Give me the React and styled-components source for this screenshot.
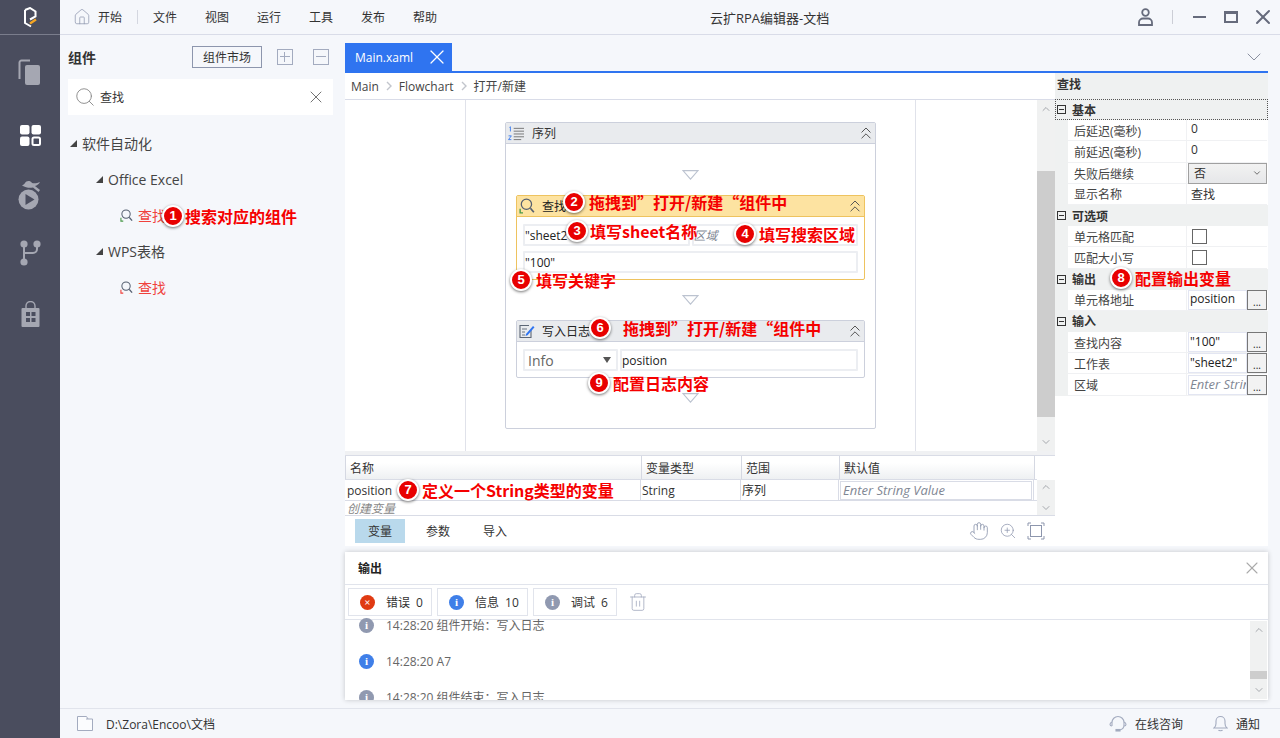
import React from "react";
import styled, { createGlobalStyle } from "styled-components";
import { ChevronDown, ChevronUp, ChevronsUp, Hand, Home, Search, Trash2, X, ZoomIn } from "lucide-react";

const Global = createGlobalStyle`
  html, body { margin: 0; padding: 0; }
  body {
    font-family: "Open Sans", "Noto Sans CJK SC", sans-serif;
    font-size: 12px;
    color: #333;
    background: #f5f7fb;
  }
`;

const Page = styled.div`
  position: relative;
  display: flex;
  width: 1280px;
  height: 738px;
  overflow: hidden;
`;

const Rail = styled.aside`
  width: 60px;
  background: #4a4d5e;
  display: flex;
  flex-direction: column;
  align-items: center;
`;

const RailLogo = styled.div`
  width: 100%;
  height: 34px;
  margin-bottom: 8px;
  border-bottom: 1px solid #7a7d8c;
  display: flex;
  align-items: center;
  justify-content: center;
`;

const RailIcon = styled.div`
  height: ${(p) => p.$h}px;
  display: flex;
  align-items: center;
  justify-content: center;
  color: ${(p) => (p.$active ? "#fff" : "#a5a7b2")};
`;

const Main = styled.div`
  flex: 1;
  display: flex;
  flex-direction: column;
  min-width: 0;
`;

const TitleBar = styled.header`
  height: 34px;
  border-bottom: 1px solid #d9dce8;
  display: flex;
  align-items: center;
  padding-left: 13px;
  position: relative;
  font-size: 12px;
  color: #333;
`;

const MenuItem = styled.span`
  margin-right: 28px;
`;

const HomeItem = styled.span`
  display: flex;
  align-items: center;
  gap: 7px;
  padding-right: 15px;
  margin-right: 15px;
  border-right: 1px solid #d4d7e0;
  height: 14px;
  color: #8d96ad;
  span { color: #333; }
`;

const AppTitle = styled.div`
  position: absolute;
  left: 650px;
  top: 8px;
  font-size: 13px;
  color: #333;
`;

const WindowButtons = styled.div`
  margin-left: auto;
  display: flex;
  align-items: center;
  color: #666b7c;
  padding-right: 5px;
`;

const WinDivider = styled.div`
  width: 1px;
  height: 14px;
  background: #ccced6;
  margin: 0 20px 0 19px;
`;

const MinBar = styled.div`
  width: 13px;
  height: 2px;
  background: currentColor;
  margin-right: 18px;
`;

const MaxBox = styled.div`
  width: 14px;
  height: 12px;
  box-sizing: border-box;
  border: 2px solid currentColor;
  border-top-width: 3px;
  margin-right: 13px;
`;

const Body = styled.div`
  flex: 1;
  display: flex;
  min-height: 0;
`;

const LeftPanel = styled.section`
  width: 285px;
  flex: none;
`;

const PanelHead = styled.div`
  height: 44px;
  padding: 0 16px 0 8px;
  display: flex;
  align-items: center;
  font-size: 14px;
  font-weight: 700;
  color: #333;
`;

const MarketButton = styled.button`
  margin-left: auto;
  width: 70px;
  height: 22px;
  padding: 0;
  box-sizing: border-box;
  background: transparent;
  border: 1px solid #8d96ad;
  font: inherit;
  font-size: 12px;
  font-weight: 400;
  color: #333;
`;

const SquareButton = styled.span`
  width: 16px;
  height: 16px;
  box-sizing: border-box;
  border: 1px solid #a3abbf;
  margin-left: ${(p) => p.$gap}px;
  position: relative;
  &::before {
    content: "";
    position: absolute;
    left: 2px;
    right: 2px;
    top: 6px;
    height: 1px;
    background: #a3abbf;
  }
  &::after {
    content: "";
    display: ${(p) => (p.$plus ? "block" : "none")};
    position: absolute;
    top: 2px;
    bottom: 2px;
    left: 6px;
    width: 1px;
    background: #a3abbf;
  }
`;

const SearchBox = styled.div`
  margin: 0 12px 11px 8px;
  height: 36px;
  background: #fff;
  display: flex;
  align-items: center;
  padding: 0 7px 0 6px;
  gap: 4px;
  font-size: 12px;
  color: #333;
  svg:last-child { margin-left: auto; }
`;

const TreeRow = styled.div`
  height: 36px;
  box-sizing: border-box;
  padding: 0 0 2px ${(p) => p.$indent}px;
  display: flex;
  align-items: center;
  gap: 5px;
  font-size: 14px;
  color: ${(p) => (p.$leaf ? "#f0413c" : "#444")};
`;

const Caret = styled.i`
  width: 0;
  height: 0;
  border-style: solid;
  border-width: 0 0 7px 7px;
  border-color: transparent transparent #444 transparent;
`;

const Workspace = styled.div`
  flex: 1;
  display: flex;
  flex-direction: column;
  min-width: 0;
  margin-right: 12px;
`;

const TabStrip = styled.div`
  height: 36px;
  flex: none;
  display: flex;
  align-items: flex-end;
  border-bottom: 2px solid #2f74f0;
  position: relative;
`;

const Tab = styled.div`
  width: 107px;
  height: 28px;
  background: #2f74f0;
  color: #fff;
  display: flex;
  align-items: center;
  justify-content: space-between;
  padding: 0 3px 0 10px;
  box-sizing: border-box;
  font-size: 12px;
`;

const TabMore = styled.span`
  position: absolute;
  right: 2px;
  top: 10px;
  color: #8a90a0;
  display: flex;
`;

const EditorRow = styled.div`
  height: 473px;
  flex: none;
  display: flex;
`;

const EditorCol = styled.div`
  flex: 1;
  min-width: 0;
  display: flex;
  flex-direction: column;
  background: #f0f1f3;
`;

const Breadcrumb = styled.div`
  height: 26px;
  background: #fff;
  border-bottom: 1px solid #d9dce8;
  display: flex;
  align-items: center;
  padding-left: 6px;
  gap: 5px;
  color: #444;
  font-size: 12px;
  svg { color: #c2c5cc; }
`;

const DesignerRow = styled.div`
  height: 351px;
  display: flex;
`;

const Canvas = styled.div`
  flex: 1;
  background: #fff;
  display: flex;
  justify-content: center;
`;

const Lane = styled.div`
  width: 451px;
  margin-right: 1px;
  box-sizing: border-box;
  border: solid #e0e2ea;
  border-width: 0 1px;
  padding: 22px 39px 0;
`;

const SeqBox = styled.div`
  height: 307px;
  box-sizing: border-box;
  border: 1px solid #ccd0dc;
  border-radius: 2px;
  padding: 0 10px;
`;

const SeqHeader = styled.div`
  height: 20px;
  margin: 0 -10px;
  background: #e9ebee;
  border-bottom: 1px solid #ccd0dc;
  display: flex;
  align-items: center;
  padding: 0 0 0 2px;
  gap: 7px;
  color: #333;
  font-size: 12px;
  svg:last-child { margin: 0 -1px 0 auto; color: #555; }
`;

const DropSvg = styled.svg`
  display: block;
  margin: ${(p) => p.$top}px auto ${(p) => p.$bottom}px;
`;

const Drop = ({ top, bottom }) => (
  <DropSvg $top={top} $bottom={bottom} width="17" height="10" viewBox="0 0 17 10" fill="none">
    <path d="M1 .6h15L8.500 9.200z" stroke="#bcc3d0" strokeWidth="1.100" />
  </DropSvg>
);

const Card = styled.div`
  border: 1px solid ${(p) => (p.$warn ? "#eec35f" : "#ccd0dc")};
  border-radius: 2px;
  padding-bottom: 6px;
`;

const CardHead = styled.div`
  height: 20px;
  background: ${(p) => (p.$warn ? "#fde3a1" : "#e9ebee")};
  border-bottom: 1px solid ${(p) => (p.$warn ? "#eec35f" : "#ccd0dc")};
  display: flex;
  align-items: center;
  padding: 0 0 0 2px;
  gap: 7px;
  font-size: 12px;
  color: #222;
  svg:last-child { margin: 0 -1px 0 auto; color: #555; }
`;

const CardRow = styled.div`
  display: flex;
  gap: 2px;
  padding: ${(p) => p.$top}px 6px 0;
`;

const Field = styled.div`
  flex: 1;
  min-width: 0;
  height: 22px;
  box-sizing: border-box;
  border: 2px solid #eceef2;
  border-radius: 1px;
  padding-left: 0;
  display: flex;
  align-items: center;
  font-size: 12px;
  color: ${(p) => (p.$hint ? "#7f8794" : "#222")};
  font-style: ${(p) => (p.$hint ? "italic" : "normal")};
  white-space: nowrap;
  overflow: hidden;
`;

const LevelField = styled(Field)`
  flex: none;
  width: 95px;
  padding: 0 5px 0 3px;
  font-size: 14px;
  color: #666;
  justify-content: space-between;
`;

const SmallCaret = styled.i`
  width: 0;
  height: 0;
  border-style: solid;
  border-width: 6px 4.5px 0;
  border-color: #555 transparent transparent;
`;

const ScrollBar = styled.div`
  width: ${(p) => p.$w || 18}px;
  flex: none;
  background: #f0f1f1;
  display: flex;
  flex-direction: column;
  align-items: center;
  justify-content: space-between;
  color: #a5a8ad;
  position: relative;
  svg { position: relative; z-index: 1; margin: 3px 0; }
`;

const VarScroll = styled(ScrollBar)`
  margin-top: 24px;
  svg { margin: 1px 0; }
`;

const Thumb = styled.div`
  position: absolute;
  left: 0;
  right: 0;
  top: ${(p) => p.$top}px;
  height: ${(p) => p.$h}px;
  background: #cdcdcd;
`;

const VarGrid = styled.div`
  height: 61px;
  margin-top: 4px;
  background: #fff;
  border-top: 1px solid #d9dce6;
  border-bottom: 1px solid #d9dce6;
  display: flex;
  box-sizing: border-box;
`;

const VarTable = styled.div`
  flex: 1;
  min-height: 0;
  display: flex;
  flex-direction: column;
`;

const VarRow = styled.div`
  flex: none;
  display: grid;
  grid-template-columns: 296px 100px 98px 195px;
  height: ${(p) => p.$h}px;
  border-bottom: 1px solid #d9dce6;
`;

const VarHeadCell = styled.div`
  background: linear-gradient(#fff 30%, #eef0f2);
  border-left: 1px solid #d5d8e2;
  border-right: 1px solid #d5d8e2;
  margin-right: -1px;
  padding: 1px 0 0 4px;
  display: flex;
  align-items: center;
  font-size: 12px;
  color: #333;
`;

const VarCell = styled.div`
  border-right: 1px solid #d9dce6;
  padding-left: ${(p) => p.$pad ?? 1}px;
  display: flex;
  align-items: center;
  font-size: 12px;
  color: #333;
`;

const HintBox = styled.div`
  flex: 1;
  height: 17px;
  margin-right: 1px;
  border: 1px solid #d9dce6;
  padding-left: 2px;
  display: flex;
  align-items: center;
  font-style: italic;
  color: #7f8794;
  font-size: 13px;
  white-space: nowrap;
  overflow: hidden;
`;

const AddVar = styled.div`
  flex: 1;
  min-height: 0;
  display: flex;
  align-items: center;
  font-size: 12px;
  font-style: italic;
  color: #888;
  padding-left: 2px;
`;

const VarTabs = styled.div`
  height: 30px;
  background: #fff;
  display: flex;
  align-items: center;
  padding-left: 10px;
  color: #8d96ad;
`;

const VarTab = styled.div`
  width: ${(p) => p.$w}px;
  height: 24px;
  display: flex;
  align-items: center;
  justify-content: center;
  font-size: 12px;
  color: #333;
  background: ${(p) => (p.$active ? "#b9d9ec" : "transparent")};
`;

const ToolIcons = styled.div`
  margin-left: auto;
  display: flex;
  align-items: center;
  gap: 10px;
  padding-right: 10px;
`;

const Props = styled.aside`
  width: 213px;
  flex: none;
  background: #fff;
`;

const PropsTitle = styled.div`
  height: 22px;
  padding: 0 0 4px 2px;
  background: #eff1f1;
  display: flex;
  align-items: center;
  font-size: 12px;
  font-weight: 700;
  color: #333;
`;

const Category = styled.div`
  height: 21.2px;
  box-sizing: border-box;
  background: #eff1f1;
  display: flex;
  align-items: center;
  padding-left: ${(p) => (p.$focus ? 1 : 2)}px;
  gap: 6px;
  font-size: 12px;
  font-weight: 700;
  color: #333;
  border: ${(p) => (p.$focus ? "1px dotted #555" : "0")};
`;

const Minus = styled.span`
  width: 9px;
  height: 9px;
  box-sizing: border-box;
  border: 1px solid #333;
  position: relative;
  &::after {
    content: "";
    position: absolute;
    left: 1px;
    right: 1px;
    top: 3px;
    height: 1px;
    background: #333;
  }
`;

const PropRow = styled.div`
  height: 21.2px;
  margin: 0 1px 0 13px;
  display: grid;
  grid-template-columns: 119px 1fr;
  box-sizing: border-box;
  border-bottom: 1px solid #f0f1f3;
  position: relative;
  &::before {
    content: "";
    position: absolute;
    left: -13px;
    top: 0;
    bottom: -1px;
    width: 13px;
    background: #eff1f1;
  }
`;

const PropLabel = styled.div`
  padding: 1px 0 0 6px;
  border-right: 1px solid #f0f1f3;
  display: flex;
  align-items: center;
  font-size: 12px;
  color: #444;
`;

const PropValue = styled.div`
  display: flex;
  align-items: center;
  padding: 0 0 ${(p) => (p.$raised ? 3 : 0)}px 4px;
  font-size: 12px;
  color: #333;
  min-width: 0;
`;

const PropSelect = styled.div`
  flex: 1;
  height: 21px;
  margin-left: -3px;
  box-sizing: border-box;
  border: 1px solid #a0a0a0;
  background: linear-gradient(#f2f2f2, #e6e7e9);
  padding: 0 4px 0 5px;
  display: flex;
  align-items: center;
  justify-content: space-between;
  svg { color: #555; }
`;

const CheckBox = styled.span`
  width: 13px;
  height: 13px;
  margin-left: 1px;
  border: 1px solid #666;
`;

const PropInput = styled.div`
  flex: 1;
  min-width: 0;
  height: 20px;
  box-sizing: border-box;
  margin-left: -3px;
  border: 1px solid #e3e6f2;
  padding: 0 0 2px 1px;
  overflow: hidden;
  white-space: nowrap;
  display: flex;
  align-items: center;
  font-size: ${(p) => (p.$hint ? 13 : 12)}px;
  color: ${(p) => (p.$hint ? "#7f8794" : "#222")};
  font-style: ${(p) => (p.$hint ? "italic" : "normal")};
`;

const Dots = styled.div`
  width: 20px;
  height: 20px;
  flex: none;
  box-sizing: border-box;
  border: 1px solid #777;
  background: #f2f2f2;
  display: flex;
  align-items: flex-end;
  justify-content: center;
  font-size: 10px;
  line-height: 14px;
  color: #222;
`;

const Output = styled.section`
  height: 148px;
  margin-top: 6px;
  flex: none;
  background: #fff;
  box-shadow: 0 0 5px rgba(0, 0, 0, 0.2);
  display: flex;
  flex-direction: column;
  position: relative;
`;

const OutputHead = styled.div`
  height: 33px;
  flex: none;
  box-sizing: border-box;
  border-bottom: 1px solid #e1e4ec;
  display: flex;
  align-items: center;
  justify-content: space-between;
  padding: 0 6px 0 13px;
  font-size: 12px;
  font-weight: 700;
  color: #222;
  svg { color: #aaa; }
`;

const OutputTools = styled.div`
  height: 35px;
  flex: none;
  box-sizing: border-box;
  border-bottom: 1px solid #e1e4ec;
  display: flex;
  align-items: center;
  padding-left: 3px;
  gap: 5px;
  svg:last-child { color: #a3abbf; margin-left: 6px; }
`;

const FilterButton = styled.div`
  width: ${(p) => p.$w}px;
  height: 28px;
  box-sizing: border-box;
  border: 1px solid #e1e4ec;
  display: flex;
  align-items: center;
  padding-left: 11px;
  gap: 11px;
  font-size: 12px;
  word-spacing: 3px;
  color: #333;
`;

const Dot = styled.span`
  width: 15px;
  height: 15px;
  flex: none;
  border-radius: 50%;
  background: ${(p) => p.$color};
  color: #fff;
  font-size: 11px;
  font-weight: 700;
  line-height: 15px;
  text-align: center;
  font-family: "Liberation Serif", serif;
`;

const LogArea = styled.div`
  flex: 1;
  display: flex;
  min-height: 0;
  padding: 1px 1px 1px 0;
`;

const LogList = styled.div`
  flex: 1;
  overflow: hidden;
  padding-left: 14px;
  margin: -14px 0 -1px;
`;

const LogRow = styled.div`
  height: 36px;
  display: flex;
  align-items: center;
  gap: 12px;
  font-size: 12px;
  color: #666;
`;

const StatusBar = styled.footer`
  height: 30px;
  flex: none;
  margin-top: 8px;
  box-sizing: border-box;
  border-top: 1px solid #e1e4ec;
  display: flex;
  align-items: center;
  padding: 0 20px 0 17px;
  font-size: 12px;
  color: #333;
  svg { color: #a3abbf; flex: none; }
`;

const PathText = styled.span`
  margin-left: 13px;
`;

const StatusRight = styled.div`
  margin-left: auto;
  display: flex;
  align-items: center;
  gap: 8px;
`;

const ConsultText = styled.span`
  margin-right: 22px;
`;

const Callout = styled.div`
  position: absolute;
  left: ${(p) => p.$x}px;
  top: ${(p) => p.$y}px;
  height: 22px;
  display: flex;
  align-items: center;
  gap: ${(p) => p.$gap}px;
  white-space: nowrap;
  font-family: "Noto Sans CJK SC", "Liberation Sans", sans-serif;
  font-size: 16px;
  font-weight: 700;
  color: #f50000;
`;

const Badge = styled.span`
  width: 18px;
  height: 18px;
  flex: none;
  border-radius: 50%;
  box-sizing: content-box;
  border: 2px solid #fff;
  background: #e80000;
  box-shadow: 0 1px 3px rgba(0, 0, 0, 0.55);
  color: #fff;
  font-family: "Liberation Sans", sans-serif;
  font-size: 13px;
  line-height: 18px;
  text-align: center;
`;

const Logo = () => (
  <svg width="14" height="21" viewBox="0 0 14 21" fill="none">
    <path d="M2 3 L7 1 L12.500 4.500 V9.500 L7 12.500" stroke="#fff" strokeWidth="2" />
    <path d="M2 3 V16 L8 19.500" stroke="#fff" strokeWidth="2" />
    <path d="M7 16.500 L13 12.500" stroke="#f5a623" strokeWidth="2.200" />
  </svg>
);

const DocsIcon = () => (
  <svg width="24" height="28" viewBox="0 0 24 28" fill="none">
    <path d="M12 1.500H3.500a2 2 0 0 0-2 2V20" stroke="currentColor" strokeWidth="2" />
    <rect x="7" y="6" width="15" height="20" rx="2" fill="currentColor" />
  </svg>
);

const GridIcon = () => (
  <svg width="21" height="21" viewBox="0 0 21 21" fill="currentColor">
    <rect width="9.500" height="9.500" rx="2" />
    <rect x="11.500" width="9.500" height="9.500" rx="2" />
    <rect y="11.500" width="9.500" height="9.500" rx="2" />
    <rect x="12.500" y="12.500" width="7.500" height="7.500" rx="1.500" fill="none" stroke="currentColor" strokeWidth="2" />
  </svg>
);

const RobotIcon = () => (
  <svg width="24" height="30" viewBox="0 0 24 30" fill="currentColor">
    <circle cx="10.500" cy="19.500" r="10" />
    <path d="M7.500 14v11l9-5.500z" fill="#4a4d5e" />
    <path d="M7 3c1-2 5-3 7 0 2 .5 5 .5 8-1-1 2-3 3.500-5 4l5 4-1.500 2-5.500-4.500c-3 .5-7 .5-11-2 1-.5 2.500-1.500 3-2.500z" />
  </svg>
);

const BranchIcon = () => (
  <svg width="22" height="26" viewBox="0 0 22 26" fill="none">
    <circle cx="5" cy="4" r="3.600" fill="currentColor" />
    <circle cx="18" cy="4" r="3.600" fill="currentColor" />
    <circle cx="5" cy="22" r="3.600" fill="currentColor" />
    <path d="M5 6v14M18 6v3a4 4 0 0 1-4 4H5" stroke="currentColor" strokeWidth="2" />
  </svg>
);

const StoreIcon = () => (
  <svg width="19" height="27" viewBox="0 0 19 27" fill="currentColor">
    <path d="M5 7V5a4.500 4.500 0 0 1 9 0v2" fill="none" stroke="currentColor" strokeWidth="1.400" />
    <path d="M1.500 7h16a1 1 0 0 1 1 1v17a1 1 0 0 1-1 1h-16a1 1 0 0 1-1-1V8a1 1 0 0 1 1-1z" />
    <path d="M5 11h4v4H5zM10.500 11h4v4h-4zM5 17h4v4H5zM10.500 17h4v4h-4z" fill="#4a4d5e" />
  </svg>
);

const UserIcon = () => (
  <svg width="15" height="18" viewBox="0 0 15 18" fill="none" stroke="currentColor" strokeWidth="1.800">
    <circle cx="7.500" cy="4.500" r="3.300" />
    <path d="M1 17v-2.500C1 12 3 10.500 5 10.500h5c2 0 4 1.500 4 4V17z" />
  </svg>
);

const LeafIcon = ({ size = 13, mark = "#4a9a4a" }) => (
  <svg width={size} height={size} viewBox="0 0 14 14" fill="none">
    <circle cx="6.500" cy="5.500" r="4.500" stroke="#555f70" strokeWidth="1.100" />
    <path d="M10 9l3 3.500" stroke="#555f70" strokeWidth="1.500" />
    <path d="M1 9.500v3.500h2.500" stroke={mark} strokeWidth="1.200" />
  </svg>
);

const SeqIcon = () => (
  <svg width="17" height="15" viewBox="0 0 18 16" fill="none">
    <path d="M6 2.500h11M6 5.500h11M6 8.500h11M6 11.500h11M6 14.500h8" stroke="#666" strokeWidth="0.900" />
    <path d="M1.500 1.500l1-.7v5M.5 10.500h3l-3 4h3" stroke="#2f74f0" strokeWidth="0.900" />
  </svg>
);

const LogIcon = () => (
  <svg width="16" height="16" viewBox="0 0 16 16" fill="none">
    <path d="M12 7v7.500H1V2.500h9" stroke="#5c6675" strokeWidth="1.100" />
    <path d="M3 6h5M3 9h3M3 12h3" stroke="#5c6675" strokeWidth="0.900" />
    <path d="M7 11l7-8 1.500 1.300-7 8L6.500 13z" fill="#2f74f0" />
  </svg>
);

const FrameIcon = () => (
  <svg width="18" height="18" viewBox="0 0 18 18" fill="none" stroke="currentColor" strokeWidth="1">
    <path d="M1 4V1h3M14 1h3v3M17 14v3h-3M4 17H1v-3" />
    <rect x="3.500" y="3.500" width="11" height="11" />
  </svg>
);

const HeadsetIcon = () => (
  <svg width="18" height="17" viewBox="0 0 18 17" fill="none" stroke="currentColor" strokeWidth="1.100">
    <path d="M3 11V7.500a6 6 0 0 1 12 0V10c0 2.500-2 4.500-4.500 5" />
    <path d="M3 7C1.500 7.500 1 8.500 1 9.500s.5 1.500 2 1.500M15 7c1.500.5 2 1.500 2 2.500s-.5 1.500-2 1.500" />
    <rect x="7" y="14.500" width="4" height="1.500" fill="currentColor" />
  </svg>
);

const BellIcon = () => (
  <svg width="15" height="17" viewBox="0 0 15 17" fill="none" stroke="currentColor" strokeWidth="1.100">
    <path d="M1 13c1.500-1 2-2.500 2-4.500V6a4.500 4.500 0 0 1 9 0v2.500c0 2 .5 3.500 2 4.500z" />
    <path d="M5.500 15c.5 1 3.500 1 4 0" />
  </svg>
);

const FolderIcon = () => (
  <svg width="16" height="15" viewBox="0 0 16 15" fill="#fbfcfe" stroke="currentColor" strokeWidth="1">
    <path d="M.5.500h9l1.500 2.500h4.500v11.500H.5z" />
    <path d="M9 3h2" />
  </svg>
);

const callouts = [
  { n: 1, x: 162, y: 205, gap: 1, text: "搜索对应的组件" },
  { n: 2, x: 563, y: 191, gap: 4, text: "拖拽到”打开/新建“组件中" },
  { n: 3, x: 566, y: 220, gap: 2, text: "填写sheet名称" },
  { n: 4, x: 734, y: 223, gap: 3, text: "填写搜索区域" },
  { n: 5, x: 510, y: 269, gap: 4, text: "填写关键字" },
  { n: 6, x: 589, y: 317, gap: 12, text: "拖拽到”打开/新建“组件中" },
  { n: 7, x: 397, y: 479, gap: 3, text: "定义一个String类型的变量" },
  { n: 8, x: 1110, y: 267, gap: 3, text: "配置输出变量" },
  { n: 9, x: 588, y: 372, gap: 3, text: "配置日志内容" },
];

const ChevronRightSmall = () => (
  <svg width="10" height="10" viewBox="0 0 10 10" fill="none" stroke="currentColor" strokeWidth="1.400">
    <path d="M3 1l4 4-4 4" />
  </svg>
);

const PropField = ({ children, hint }) => (
  <PropValue>
    <PropInput $hint={hint}>{children}</PropInput>
    <Dots>...</Dots>
  </PropValue>
);

export default function App() {
  return (
    <Page>
      <Global />
      <Rail>
        <RailLogo><Logo /></RailLogo>
        <RailIcon $h={60}><DocsIcon /></RailIcon>
        <RailIcon $h={64} $active><GridIcon /></RailIcon>
        <RailIcon $h={56}><RobotIcon /></RailIcon>
        <RailIcon $h={60}><BranchIcon /></RailIcon>
        <RailIcon $h={62}><StoreIcon /></RailIcon>
      </Rail>
      <Main>
        <TitleBar>
          <HomeItem><Home size={18} strokeWidth={1} /><span>开始</span></HomeItem>
          <MenuItem>文件</MenuItem>
          <MenuItem>视图</MenuItem>
          <MenuItem>运行</MenuItem>
          <MenuItem>工具</MenuItem>
          <MenuItem>发布</MenuItem>
          <MenuItem>帮助</MenuItem>
          <AppTitle>云扩RPA编辑器-文档</AppTitle>
          <WindowButtons>
            <UserIcon />
            <WinDivider />
            <MinBar />
            <MaxBox />
            <X size={24} strokeWidth={2} />
          </WindowButtons>
        </TitleBar>
        <Body>
          <LeftPanel>
            <PanelHead>
              组件
              <MarketButton>组件市场</MarketButton>
              <SquareButton $plus $gap={15} />
              <SquareButton $gap={20} />
            </PanelHead>
            <SearchBox>
              <Search size={22} strokeWidth={1} color="#888" />
              查找
              <X size={20} strokeWidth={1.1} color="#666" />
            </SearchBox>
            <TreeRow $indent={10}><Caret />软件自动化</TreeRow>
            <TreeRow $indent={36}><Caret />Office Excel</TreeRow>
            <TreeRow $indent={60} $leaf><LeafIcon />查找</TreeRow>
            <TreeRow $indent={36}><Caret />WPS表格</TreeRow>
            <TreeRow $indent={60} $leaf><LeafIcon mark="#f0413c" />查找</TreeRow>
          </LeftPanel>
          <Workspace>
            <TabStrip>
              <Tab>Main.xaml<X size={24} strokeWidth={1.2} /></Tab>
              <TabMore><ChevronDown size={24} strokeWidth={1} /></TabMore>
            </TabStrip>
            <EditorRow>
              <EditorCol>
                <Breadcrumb>
                  Main<ChevronRightSmall />Flowchart<ChevronRightSmall />打开/新建
                </Breadcrumb>
                <DesignerRow>
                  <Canvas>
                    <Lane>
                      <SeqBox>
                        <SeqHeader>
                          <SeqIcon />序列
                          <ChevronsUp size={20} strokeWidth={1.2} />
                        </SeqHeader>
                        <Drop top={26} bottom={15} />
                        <Card $warn>
                          <CardHead $warn>
                            <LeafIcon size={16} />查找
                            <ChevronsUp size={20} strokeWidth={1.2} />
                          </CardHead>
                          <CardRow $top={7}>
                            <Field>"sheet2"</Field>
                            <Field $hint>区域</Field>
                          </CardRow>
                          <CardRow $top={5}>
                            <Field>"100"</Field>
                          </CardRow>
                        </Card>
                        <Drop top={15} bottom={15} />
                        <Card>
                          <CardHead>
                            <LogIcon />写入日志
                            <ChevronsUp size={20} strokeWidth={1.2} />
                          </CardHead>
                          <CardRow $top={7}>
                            <LevelField>Info<SmallCaret /></LevelField>
                            <Field>position</Field>
                          </CardRow>
                        </Card>
                        <Drop top={15} bottom={0} />
                      </SeqBox>
                    </Lane>
                  </Canvas>
                  <ScrollBar>
                    <ChevronUp size={12} />
                    <Thumb $top={71} $h={246} />
                    <ChevronDown size={12} />
                  </ScrollBar>
                </DesignerRow>
                <VarGrid>
                  <VarTable>
                    <VarRow $h={23}>
                      <VarHeadCell>名称</VarHeadCell>
                      <VarHeadCell>变量类型</VarHeadCell>
                      <VarHeadCell>范围</VarHeadCell>
                      <VarHeadCell>默认值</VarHeadCell>
                    </VarRow>
                    <VarRow $h={20}>
                      <VarCell $pad={2}>position</VarCell>
                      <VarCell>String</VarCell>
                      <VarCell>序列</VarCell>
                      <VarCell $pad={1}><HintBox>Enter String Value</HintBox></VarCell>
                    </VarRow>
                    <AddVar>创建变量</AddVar>
                  </VarTable>
                  <VarScroll>
                    <ChevronUp size={12} />
                    <ChevronDown size={12} />
                  </VarScroll>
                </VarGrid>
                <VarTabs>
                  <VarTab $w={50} $active>变量</VarTab>
                  <VarTab $w={66}>参数</VarTab>
                  <VarTab $w={48}>导入</VarTab>
                  <ToolIcons>
                    <Hand size={20} strokeWidth={1} />
                    <ZoomIn size={18} strokeWidth={1} />
                    <FrameIcon />
                  </ToolIcons>
                </VarTabs>
              </EditorCol>
              <Props>
                <PropsTitle>查找</PropsTitle>
                <Category $focus><Minus />基本</Category>
                <PropRow><PropLabel>后延迟(毫秒)</PropLabel><PropValue $raised>0</PropValue></PropRow>
                <PropRow><PropLabel>前延迟(毫秒)</PropLabel><PropValue $raised>0</PropValue></PropRow>
                <PropRow>
                  <PropLabel>失败后继续</PropLabel>
                  <PropValue><PropSelect>否<ChevronDown size={10} /></PropSelect></PropValue>
                </PropRow>
                <PropRow><PropLabel>显示名称</PropLabel><PropValue>查找</PropValue></PropRow>
                <Category><Minus />可选项</Category>
                <PropRow><PropLabel>单元格匹配</PropLabel><PropValue><CheckBox /></PropValue></PropRow>
                <PropRow><PropLabel>匹配大小写</PropLabel><PropValue><CheckBox /></PropValue></PropRow>
                <Category><Minus />输出</Category>
                <PropRow><PropLabel>单元格地址</PropLabel><PropField>position</PropField></PropRow>
                <Category><Minus />输入</Category>
                <PropRow><PropLabel>查找内容</PropLabel><PropField>"100"</PropField></PropRow>
                <PropRow><PropLabel>工作表</PropLabel><PropField>"sheet2"</PropField></PropRow>
                <PropRow><PropLabel>区域</PropLabel><PropField hint>Enter String</PropField></PropRow>
              </Props>
            </EditorRow>
            <Output>
              <OutputHead>输出<X size={20} strokeWidth={1.3} /></OutputHead>
              <OutputTools>
                <FilterButton $w={84}><Dot $color="#e03a12">×</Dot>错误 0</FilterButton>
                <FilterButton $w={91}><Dot $color="#3f7fe8">i</Dot>信息 10</FilterButton>
                <FilterButton $w={84}><Dot $color="#9099b0">i</Dot>调试 6</FilterButton>
                <Trash2 size={20} strokeWidth={1} />
              </OutputTools>
              <LogArea>
                <LogList>
                  <LogRow><Dot $color="#9099b0">i</Dot>14:28:20 组件开始：写入日志</LogRow>
                  <LogRow><Dot $color="#3f7fe8">i</Dot>14:28:20 A7</LogRow>
                  <LogRow><Dot $color="#9099b0">i</Dot>14:28:20 组件结束：写入日志</LogRow>
                </LogList>
                <ScrollBar $w={17}>
                  <ChevronUp size={12} />
                  <Thumb $top={50} $h={8} />
                  <ChevronDown size={12} />
                </ScrollBar>
              </LogArea>
            </Output>
          </Workspace>
        </Body>
        <StatusBar>
          <FolderIcon />
          <PathText>D:\Zora\Encoo\文档</PathText>
          <StatusRight>
            <HeadsetIcon />
            <ConsultText>在线咨询</ConsultText>
            <BellIcon />
            通知
          </StatusRight>
        </StatusBar>
      </Main>
      {callouts.map((c) => (
        <Callout key={c.n} $x={c.x} $y={c.y} $gap={c.gap}>
          <Badge>{c.n}</Badge>
          {c.text}
        </Callout>
      ))}
    </Page>
  );
}
